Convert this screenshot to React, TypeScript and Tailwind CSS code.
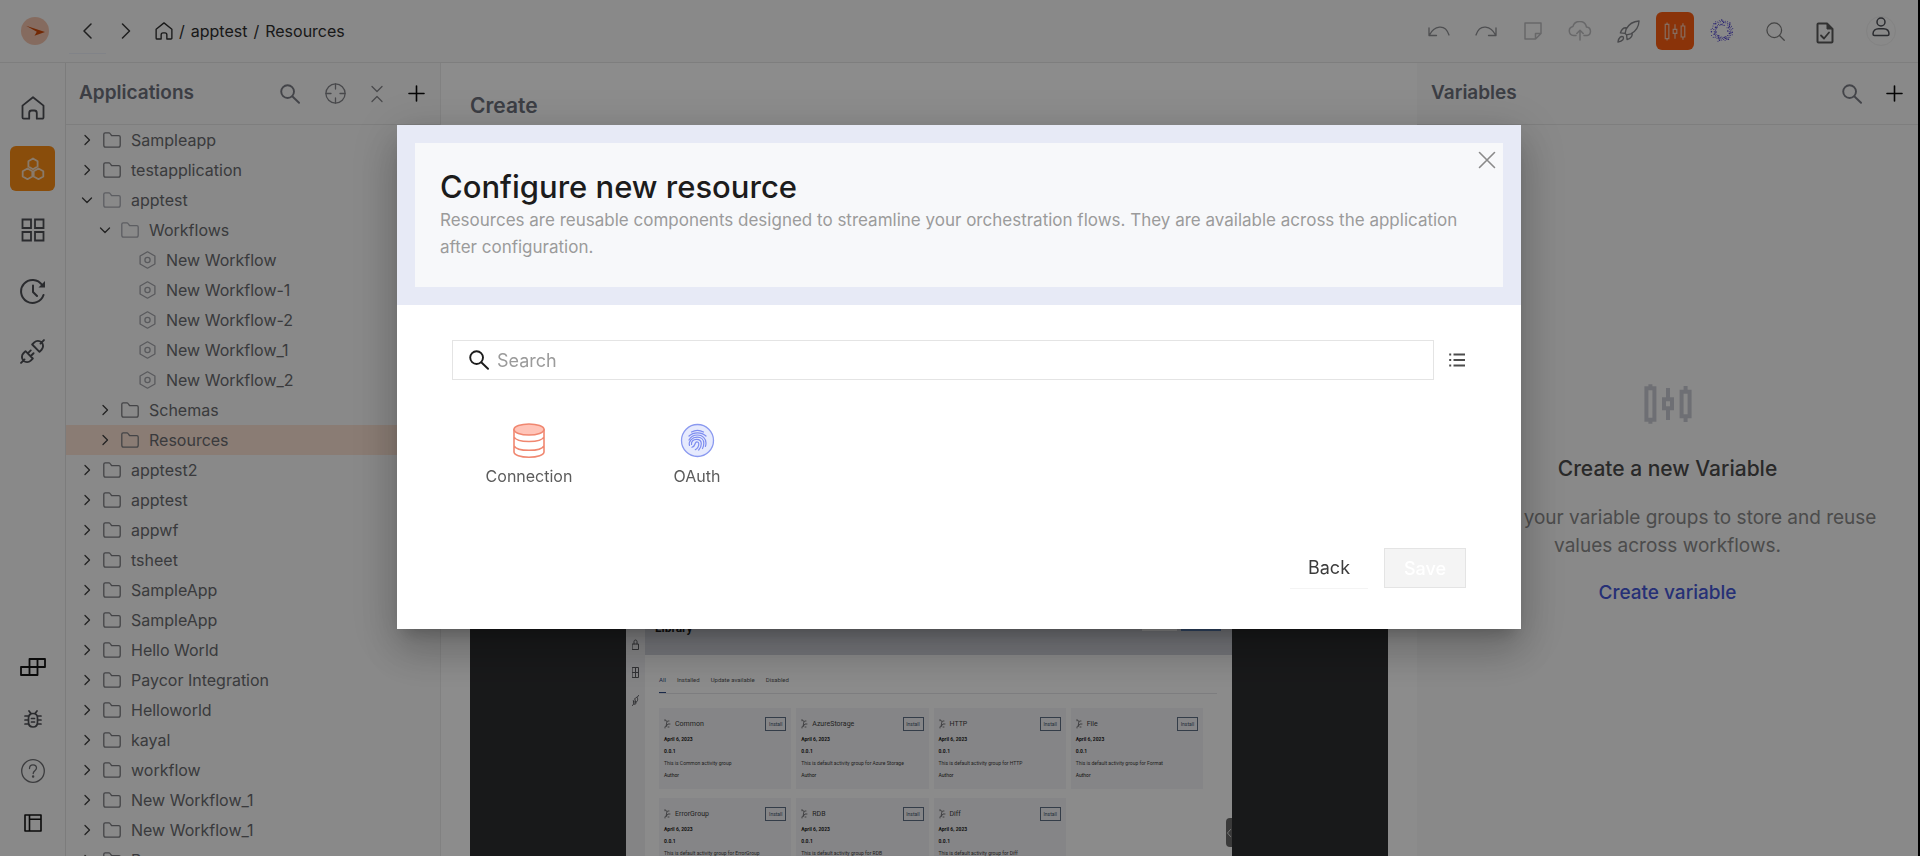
import React from "react";

type IconProps = { children: React.ReactNode; className?: string; vb?: string; sw?: number };

function Svg({ children, className = "", vb = "0 0 24 24", sw = 1.5 }: IconProps) {
  return (
    <svg
      viewBox={vb}
      className={"block shrink-0 " + className}
      fill="none"
      stroke="currentColor"
      strokeWidth={sw}
      strokeLinecap="round"
      strokeLinejoin="round"
      aria-hidden="true"
    >
      {children}
    </svg>
  );
}

function IconButton({ label, className = "", children }: { label: string; className?: string; children: React.ReactNode }) {
  return (
    <button type="button" aria-label={label} className={"flex shrink-0 items-center justify-center " + className}>
      {children}
    </button>
  );
}

const HomeIcon = ({ className }: { className: string }) => (
  <Svg className={className} sw={1.8}>
    <path d="M1.500 9.600 12 1.200l10.500 8.400V21.500a1.200 1.200 0 0 1-1.200 1.200H15.800V17a2.500 2.500 0 0 0-2.500-2.500h-2.600A2.500 2.500 0 0 0 8.200 17v5.700H2.700a1.200 1.200 0 0 1-1.200-1.200Z" />
  </Svg>
);

const SearchIcon = ({ className, sw = 1.9 }: { className: string; sw?: number }) => (
  <Svg className={className} sw={sw} vb="0 0 20 20">
    <circle cx="7.600" cy="7.600" r="6.400" />
    <path d="m12.500 12.500 6.500 6.300" />
  </Svg>
);

const ThinSearchIcon = ({ className }: { className: string }) => (
  <Svg className={className} sw={1.3} vb="0 0 20 20">
    <circle cx="8.700" cy="8.700" r="7.700" />
    <path d="m14.200 14.200 5 5" />
  </Svg>
);

const PlusIcon = ({ className }: { className: string }) => (
  <Svg className={className} vb="0 0 17 17" sw={1.6}>
    <path d="M8.500 1v15M1 8.500h15" />
  </Svg>
);

const SlidersIcon = ({ className, sw = 2 }: { className: string; sw?: number }) => (
  <Svg className={className} vb="0 0 24 21" sw={sw}>
    <path
      d="M1.200 2.600h4v15.800h-4ZM3.200.6v2M3.200 18.400v2M12 2.500v5.600M12 12.600v5.900M10 8.100h4v4.500h-4ZM18.800 4.400h4v12.200h-4ZM20.800 1.500v2.900M20.800 16.600v2.900"
      strokeLinecap="butt"
      strokeLinejoin="miter"
    />
  </Svg>
);

const FolderIcon = ({ className }: { className: string }) => (
  <Svg className={className} vb="0 0 18 16" sw={1.3}>
    <path d="M.8 13.300V2.200C.8 1.300 1.300.8 2.200.8h3.600c.6 0 1 .2 1.300.7l1 1.500c.3.4.6.6 1.100.6h6.600c.9 0 1.400.5 1.400 1.400v8.300c0 1.300-.6 1.900-1.900 1.900H2.700C1.400 15.200.8 14.600.8 13.300Z" />
  </Svg>
);

const HexIcon = () => (
  <Svg className="h-[18px] w-[17px] text-[#a3a4aa]" vb="0 0 17 18" sw={1.3}>
    <path d="M8.500.8 15.900 5v8l-7.400 4.200L1.100 13V5Z" />
    <circle cx="8.500" cy="9" r="2.600" />
  </Svg>
);

const PlugIcon = ({ className, sw = 1.8 }: { className: string; sw?: number }) => (
  <Svg className={className} sw={sw}>
    <path d="m1 23 3.300-3.300M19.700 4.300 23 1M11.700 5.300l7 7 2-2a4.900 4.900 0 0 0-7-7ZM12.300 18.700l-7-7-2 2a4.900 4.900 0 0 0 7 7ZM7.700 13.600l2.600-2.600M10.400 16.300l2.600-2.600" />
  </Svg>
);

const GridIcon = ({ className, sw = 1.8 }: { className: string; sw?: number }) => (
  <Svg className={className} sw={sw}>
    <path d="M1.500 1.500h8.500v8.500H1.500ZM14 1.500h8.500v8.500H14ZM1.500 14h8.500v8.500H1.500ZM14 14h8.500v8.500H14Z" strokeLinejoin="miter" />
  </Svg>
);

const ringDots = Array.from({ length: 84 }, (_, i) => {
  const angle = i * 2.399;
  const radius = 5.8 + ((i * 37) % 23) * 0.25;
  return { x: 12 + radius * Math.cos(angle), y: 12 + radius * Math.sin(angle), r: i % 3 === 0 ? 0.75 : 0.5 };
});

const DotRing = () => (
  <Svg className="size-6">
    {ringDots.map((dot, i) => (
      <circle key={i} cx={dot.x} cy={dot.y} r={dot.r} fill="currentColor" stroke="none" />
    ))}
  </Svg>
);

type Node = { name: string; level: 0 | 1 | 2; open?: boolean; active?: boolean };

const tree: Node[] = [
  { name: "Sampleapp", level: 0 },
  { name: "testapplication", level: 0 },
  { name: "apptest", level: 0, open: true },
  { name: "Workflows", level: 1, open: true },
  { name: "New Workflow", level: 2 },
  { name: "New Workflow-1", level: 2 },
  { name: "New Workflow-2", level: 2 },
  { name: "New Workflow_1", level: 2 },
  { name: "New Workflow_2", level: 2 },
  { name: "Schemas", level: 1 },
  { name: "Resources", level: 1, active: true },
  { name: "apptest2", level: 0 },
  { name: "apptest", level: 0 },
  { name: "appwf", level: 0 },
  { name: "tsheet", level: 0 },
  { name: "SampleApp", level: 0 },
  { name: "SampleApp", level: 0 },
  { name: "Hello World", level: 0 },
  { name: "Paycor Integration", level: 0 },
  { name: "Helloworld", level: 0 },
  { name: "kayal", level: 0 },
  { name: "workflow", level: 0 },
  { name: "New Workflow_1", level: 0 },
  { name: "New Workflow_1", level: 0 },
  { name: "Paycor", level: 0 },
];

const indents = ["pl-[15px]", "pl-[33px]", "pl-[73px]"];

function TreeRow({ node }: { node: Node }) {
  return (
    <li>
      <button
        type="button"
        className={
          "flex h-[30px] w-full items-center gap-[10px] text-left text-[16px] text-[#6a6b6f] " +
          indents[node.level] +
          (node.active ? " bg-[#fbe2d3]" : "")
        }
      >
        {node.level < 2 ? (
          <>
            <Svg className="size-3 text-[#3f3f3f]" vb="0 0 12 12" sw={1.3}>
              <path d={node.open ? "m1.500 4 4.500 4.500L10.500 4" : "M4 1.500 8.500 6 4 10.500"} />
            </Svg>
            <FolderIcon className={"h-4 w-[18px] " + (node.open ? "text-[#a9abb3]" : "text-[#7c7d81]")} />
          </>
        ) : (
          <HexIcon />
        )}
        <span>{node.name}</span>
      </button>
    </li>
  );
}

function TopBar() {
  return (
    <header className="flex h-[63px] shrink-0 items-center border-b border-[#e5e5e5] bg-[#f9f9f9] pr-[22px] pl-[21px]">
      <Svg className="size-7" vb="0 0 28 28">
        <circle cx="14" cy="14" r="14" fill="#f3c4ae" stroke="none" />
        <path d="M5 8.800 24 15 13.500 18.800l2.300-4Z" fill="#cf4a08" stroke="none" />
      </Svg>
      <div className="ml-5 flex items-center">
        <IconButton label="Back" className="h-[45px] w-[37px] border-b border-[#eceef8] text-[#3a3a3a]">
          <Svg className="size-4" vb="0 0 16 16">
            <path d="m11 1-7 7 7 7" />
          </Svg>
        </IconButton>
        <IconButton label="Forward" className="h-[45px] w-[39px] text-[#3a3a3a]">
          <Svg className="size-4" vb="0 0 16 16">
            <path d="m4.500 1 7 7-7 7" />
          </Svg>
        </IconButton>
      </div>
      <nav aria-label="Breadcrumb" className="ml-[10px] flex items-center gap-[6px] text-[16px] text-[#2f2f2f]">
        <a href="#home" aria-label="Home">
          <HomeIcon className="size-[18px]" />
        </a>
        <span>/</span>
        <a href="#apptest">apptest</a>
        <span>/</span>
        <a href="#resources">Resources</a>
      </nav>
      <div className="ml-auto flex items-center text-[#7c7c7c]">
        <IconButton label="Undo" className="w-[46px] text-[#8f9094]">
          <Svg className="h-3 w-[22px]" vb="0 0 22 12" sw={1.3}>
            <path d="M1 3v7.500h7.500M1.300 10.200C6 1 17-2 21 10" />
          </Svg>
        </IconButton>
        <IconButton label="Redo" className="w-[47px] text-[#8f9094]">
          <Svg className="h-3 w-[22px]" vb="0 0 22 12" sw={1.3}>
            <path d="M21 3v7.500h-7.500M20.700 10.200C16 1 5-2 1 10" />
          </Svg>
        </IconButton>
        <IconButton label="Note" className="w-12 text-[#bdbdc0]">
          <Svg className="size-[18px]" vb="0 0 18 18">
            <path d="M1 1h16v10.500L11.500 17H1ZM17 11.500h-5.500V17" />
          </Svg>
        </IconButton>
        <IconButton label="Publish" className="w-[46px] text-[#bdbdc0]">
          <Svg className="h-5 w-6" vb="0 0 24 20">
            <path d="M8 14.500H5.500a4.500 4.500 0 0 1-.6-8.900A7 7 0 0 1 18.500 6a4.300 4.300 0 0 1 .5 8.500h-3M12 19V9.500M8.800 12.500 12 9.300l3.200 3.200" />
          </Svg>
        </IconButton>
        <IconButton label="Deploy" className="mr-[3px] w-[50px] text-[#85868a]">
          <Svg className="size-[23px]" sw={1.4}>
            <path d="M23 1C17 1.300 12.500 4 9.500 9.500l-1 4.500 1.500 1.500 4.500-1C20 11.500 22.700 7 23 1ZM10.500 8.200c-3.500-.7-5.500.5-7 5.300l5 .5M15.800 13.500c.7 3.500-.5 5.500-5.300 7l-.5-5M6.500 17.500c-2-.8-4.500 0-5.500 5.500 5.500-1 6.300-3.500 5.500-5.500Z" />
          </Svg>
        </IconButton>
        <IconButton label="Variables" className="size-[38px] rounded-md bg-[#fb5e12] text-[#f4c7b0]">
          <SlidersIcon className="h-[19px] w-[22px]" sw={1.3} />
        </IconButton>
        <IconButton label="Assistant" className="ml-1 w-[47px] text-[#4438cc]">
          <DotRing />
        </IconButton>
        <IconButton label="Search" className="w-[60px]">
          <ThinSearchIcon className="size-[19px]" />
        </IconButton>
        <IconButton label="Validate" className="w-10 text-[#5a5a5a]">
          <Svg className="mt-1 h-[22px] w-[18px]" vb="0 0 18 22" sw={2}>
            <path d="M2.500 1.500h8.500l5.500 5.500v12.500a1 1 0 0 1-1 1h-13a1 1 0 0 1-1-1v-17a1 1 0 0 1 1-1Z" />
            <path d="M11 1.500v5.500h5.500Z" fill="currentColor" strokeWidth="1" />
            <path d="m5 13.500 3 3 5-6" strokeWidth="1.800" />
          </Svg>
        </IconButton>
        <IconButton label="Account" className="ml-[21px] size-[30px] rounded-full border border-[#eeeeee] text-[#4d4f57]">
          <Svg className="mb-2 h-5 w-[18px]" vb="0 0 18 20" sw={1.5}>
            <circle cx="9" cy="5" r="4" />
            <path d="M1 17c0-3.500 2.500-5.300 5.500-5.300h5c3 0 5.500 1.800 5.500 5.300 0 1-.5 1.500-1.500 1.500h-13C1.500 18.500 1 18 1 17Z" />
          </Svg>
        </IconButton>
      </div>
    </header>
  );
}

function SideRail() {
  return (
    <nav
      aria-label="Main"
      className="flex w-[66px] shrink-0 flex-col items-start justify-between border-r border-[#e2e2e2] bg-[#f9f9f9] pt-[22px] pb-[11px] pl-[10px] text-[#4d4f55]"
    >
      <div className="flex flex-col gap-4">
        <IconButton label="Home" className="size-[45px]">
          <HomeIcon className="size-6" />
        </IconButton>
        <IconButton label="Applications" className="size-[45px] rounded-md bg-[#f98c14] text-[#f9dfc2]">
          <Svg className="h-6 w-6" sw={1.8}>
            <path d="m12 1.500 4.600 2.700v5.300L12 12.200 7.400 9.500V4.200ZM6.500 11.500l4.800 2.700v5.300l-4.800 2.700-4.800-2.700v-5.300ZM17.500 11.500l4.800 2.700v5.300l-4.800 2.700-4.800-2.700v-5.300Z" />
          </Svg>
        </IconButton>
        <IconButton label="Library" className="size-[45px]">
          <GridIcon className="size-6" />
        </IconButton>
        <IconButton label="History" className="size-[45px]">
          <Svg className="size-[26px]" vb="0 0 26 26" sw={2}>
            <path d="M23.500 17A11.500 11.500 0 1 1 22 6.800M13 7.500V14l4 4" />
            <path d="M25 3v6.500h-6.500Z" fill="currentColor" stroke="none" />
          </Svg>
        </IconButton>
        <IconButton label="Connectors" className="size-[45px]">
          <PlugIcon className="size-[25px]" />
        </IconButton>
      </div>
      <div className="flex flex-col gap-[7px]">
        <IconButton label="Modules" className="size-[45px] text-[#141414]">
          <Svg className="h-[18px] w-[26px]" vb="0 0 26 18" sw={1.8}>
            <path d="M1 9h8.500v8H1ZM9.500 9h8v8h-8ZM9.500 1h8v8h-8ZM17.500 1H25v8h-7.500Z" />
          </Svg>
        </IconButton>
        <IconButton label="Debug" className="size-[45px] text-[#4d4f55]">
          <Svg className="h-[18px] w-[18px]" vb="0 0 18 18" sw={1.7}>
            <path d="M9 3.500c2.800 0 4.500 2 4.500 4.500v4c0 3-1.800 5-4.500 5s-4.500-2-4.500-5V8c0-2.500 1.700-4.500 4.500-4.500ZM5 1l2 2.500M13 1l-2 2.500M1 6h3.500M1 10h3.500M1 14h3.500M13.500 6H17M13.500 10H17M13.500 14H17M7.500 8.500h3M7.500 12h3" />
          </Svg>
        </IconButton>
        <IconButton label="Help" className="size-[45px] text-[#6d6e72]">
          <Svg className="size-6" sw={1.3}>
            <circle cx="12" cy="12" r="11.300" />
            <path d="M8.500 9.500c0-2.200 1.500-3.700 3.500-3.700s3.500 1.300 3.500 3.300c0 2.600-3.300 2.800-3.300 5.400" />
            <circle cx="12.100" cy="17.600" r=".6" fill="currentColor" />
          </Svg>
        </IconButton>
        <IconButton label="Panels" className="size-[45px] text-[#141414]">
          <Svg className="size-[18px]" vb="0 0 18 18" sw={1.6}>
            <path d="M1 1h16v16H1ZM5.500 1v16M5.500 5.200H17" />
          </Svg>
        </IconButton>
      </div>
    </nav>
  );
}

type Pack = { name: string; text: string };

const packs: Pack[] = [
  { name: "Common", text: "This is Common activity group" },
  { name: "AzureStorage", text: "This is default activity group for Azure Storage" },
  { name: "HTTP", text: "This is default activity group for HTTP" },
  { name: "File", text: "This is default activity group for Format" },
  { name: "ErrorGroup", text: "This is default activity group for ErrorGroup" },
  { name: "RDB", text: "This is default activity group for RDB" },
  { name: "Diff", text: "This is default activity group for Diff" },
];

function PackCard({ pack }: { pack: Pack }) {
  return (
    <article className="flex h-[81px] flex-col bg-[#f3f3f6] px-[5px] pt-[9px] text-[5px] leading-[12px] text-[#3c3c3c]">
      <div className="mb-[2px] flex h-[14px] items-center gap-1">
        <Svg className="h-[10px] w-[7px] text-[#55565a]" vb="0 0 7 10" sw={0.8}>
          <path d="M1 .8v1M1 8v1M3 2.500l-1 5M3 2.500 1.500 1M2 7.500 4 5h2M4 2h1M4 8h1" />
        </Svg>
        <h4 className="text-[7px]">{pack.name}</h4>
        <button type="button" className="ml-auto flex h-[14px] w-[21px] items-center justify-center border border-[#5f6f85] text-[5px] text-[#44566e]">
          Install
        </button>
      </div>
      <p className="font-bold text-[#1c1c1c]">April 6, 2023</p>
      <p className="font-bold text-[#1c1c1c]">0.0.1</p>
      <p className="whitespace-nowrap">{pack.text}</p>
      <p className="text-[#1c1c1c]">Author</p>
    </article>
  );
}

function Preview() {
  return (
    <div className="flex min-h-0 flex-1 justify-center overflow-hidden bg-[#2d2e30] font-[Roboto,sans-serif]">
      <div className="relative flex w-[66%] bg-[#fdfdfd]">
        <div className="flex w-[19px] shrink-0 flex-col items-center gap-[17px] bg-[#f0f0f3] pt-[486px] text-[#5a5b60]">
          <Svg className="h-[11px] w-[7px]" vb="0 0 7 11" sw={1}>
            <path d="M.5 5h6v5.500h-6ZM2 5V2.500C2 .5 5 .5 5 2.500V5" />
          </Svg>
          <Svg className="h-[11px] w-[7px]" vb="0 0 7 11" sw={1}>
            <path d="M.5.5h6v10h-6ZM3.500.5v10M.5 5.500h6" />
          </Svg>
          <Svg className="h-[11px] w-[7px]" vb="0 0 7 11" sw={1}>
            <path d="M.5 10.500 2 8.500M5 2.500 6.500.5M3 3.500C5 1 6 3 5.500 5.500L4 7.500ZM1.500 6 4 8.500C2.500 10 1 9.500 1.500 6Z" />
          </Svg>
        </div>
        <div className="flex min-w-0 flex-1 flex-col">
          <div className="flex h-[502px] shrink-0 items-end justify-between bg-[#d4d6de] pr-[11px] pb-4 pl-[10px] text-[#1c1c1c]">
            <h3 className="text-[12px] leading-[22px] font-bold">Library</h3>
            <div className="mb-2 flex gap-1">
              <span className="h-4 w-[35px] bg-white" />
              <span className="h-4 w-10 bg-[#5b82ba]" />
            </div>
          </div>
          <div className="mr-[15px] ml-[14px] flex h-[39px] shrink-0 items-end gap-[11px] border-b border-[#e4e4e8] text-[6px] text-[#55565a]">
            <span className="h-[18px] border-b border-[#2e4b86] text-[#2e4b86]">All</span>
            <span className="h-[18px]">Installed</span>
            <span className="h-[18px]">Update available</span>
            <span className="h-[18px]">Disabled</span>
          </div>
          <div className="mt-[14px] mr-[29px] ml-[14px] grid grid-cols-4 gap-x-[5px] gap-y-[9px]">
            {packs.map((pack) => (
              <PackCard key={pack.name} pack={pack} />
            ))}
          </div>
        </div>
        <div className="absolute right-0 bottom-[9px] flex h-[29px] w-[6px] items-center justify-center rounded-l-sm bg-[#6a6a6a] text-[#d8d8d8]">
          <Svg className="h-2 w-1" vb="0 0 4 8" sw={1}>
            <path d="M3.500.500.500 4l3 3.500" />
          </Svg>
        </div>
      </div>
    </div>
  );
}

function ResourceTile({ label, children }: { label: string; children: React.ReactNode }) {
  return (
    <button type="button" className="flex w-[168px] flex-col items-center gap-[6px] text-[16px] leading-6 text-[#5c5c5c]">
      {children}
      {label}
    </button>
  );
}

function ResourceDialog() {
  return (
    <div className="fixed inset-y-0 right-0.5 left-0 flex items-start justify-center bg-black/45 px-8 pt-[125px]">
      <section
        role="dialog"
        aria-modal="true"
        aria-labelledby="dialog-title"
        className="w-full max-w-[1124px] bg-white shadow-[0_11px_15px_-7px_rgba(0,0,0,0.2),0_24px_38px_3px_rgba(0,0,0,0.14),0_9px_46px_8px_rgba(0,0,0,0.12)]"
      >
        <div className="relative border-[18px] border-[#e7eaf6] bg-[#f7f8fa] pt-6 pr-10 pb-[26px] pl-[25px]">
          <h2 id="dialog-title" className="text-[31px] leading-[40px] font-medium text-[#1c1c1c]">
            Configure new resource
          </h2>
          <p className="text-[17px] leading-[27px] text-[#9b9b9b]">
            Resources are reusable components designed to streamline your orchestration flows. They are available across the
            application after configuration.
          </p>
          <IconButton label="Close" className="absolute top-[7px] right-[6px] size-5 text-[#8a8a8a]">
            <Svg className="size-[18px]" vb="0 0 18 18" sw={1.6}>
              <path d="m1.500 1.500 15 15M16.500 1.500l-15 15" />
            </Svg>
          </IconButton>
        </div>
        <div className="px-[55px] pt-[35px] pb-10">
          <div className="flex items-center">
            <label className="flex h-10 flex-1 items-center gap-2 border border-[#e4e4e4] pl-4">
              <SearchIcon className="size-5 text-[#1c1c1c]" />
              <input
                type="text"
                aria-label="Search resources"
                placeholder="Search"
                className="h-full min-w-0 flex-1 bg-transparent text-[18px] outline-none placeholder:text-[#9b9b9b]"
              />
            </label>
            <IconButton label="List view" className="ml-[14px] h-5 w-[18px] text-[#4c4c4c]">
              <Svg className="h-4 w-[18px]" vb="0 0 18 16" sw={2}>
                <path d="M5.500 2.500h11.500M5.500 8h11.500M5.500 13.500h11.500M1.200 2.500h2M1.200 8h2M1.200 13.500h2" strokeLinecap="butt" />
              </Svg>
            </IconButton>
          </div>
          <div className="mt-[43px] -ml-[7px] flex">
            <ResourceTile label="Connection">
              <Svg className="h-[35px] w-8" vb="0 0 32 35" sw={1.6}>
                <path
                  d="M1 6.500v22.500c0 3 6.500 5.200 15 5.200s15-2.200 15-5.200V6.500M1 14c1.500 3 7.500 4.500 15 4.500S29.500 17 31 14M1 22.800c1.500 3 7.500 4.500 15 4.500s13.500-1.500 15-4.500"
                  stroke="#f08770"
                />
                <ellipse cx="16" cy="6.500" rx="15" ry="5.500" fill="#ffc4b8" stroke="#f08770" />
              </Svg>
            </ResourceTile>
            <ResourceTile label="OAuth">
              <Svg className="size-[35px]" vb="0 0 35 35" sw={1.3}>
                <circle cx="17.500" cy="17.500" r="16" fill="#e6eafd" stroke="#8b9af0" />
                <g stroke="#7d8cf0" strokeWidth="1.200">
                  <path d="M11.500 9c3.500-1.900 8.500-1.900 12 0M9 13c4.500-4.300 12.500-4.300 17 0M9 17c1.500-3 4.700-5 8.500-5 5 0 8.500 3.500 8.500 8 0 1.300-.2 2.500-.6 3.500" />
                  <path d="M9.500 22.500c-1.300-4 2.500-8.300 7.700-8.300 4 0 6.600 2.600 6.600 6 0 2-.5 3.800-1.300 5.300M12 24.300c3.200-1 2.700-3.300 3.500-4.500 1-1.500 3.300-1 3.300.9 0 2.500-1.500 4.800-3.500 6" />
                  <path d="M11.500 21.500c-.5-3 2-5.200 5-5.200 3 0 4.800 1.900 4.800 4.500 0 2.400-1 4.600-2.600 6.200" />
                </g>
              </Svg>
            </ResourceTile>
          </div>
          <div className="mt-[59px] flex items-center justify-end gap-4">
            <button type="button" className="h-[42px] w-[78px] border-b border-[#f4f4f4] text-[18px] text-[#3c3c3c]">
              Back
            </button>
            <button type="button" disabled className="h-10 w-[82px] border border-[#e4e4e4] bg-[#f4f4f4] text-[18px] font-medium text-white">
              Save
            </button>
          </div>
        </div>
      </section>
    </div>
  );
}

export default function App() {
  return (
    <div className="flex h-screen flex-col overflow-hidden border-r-2 border-black bg-white font-[Inter,sans-serif]">
      <TopBar />
      <div className="flex min-h-0 flex-1">
        <SideRail />
        <aside className="flex w-[375px] shrink-0 flex-col border-r border-[#ececec] bg-[#f9f9f9]">
          <div className="flex h-[62px] shrink-0 items-center border-b border-[#e5e5e5] pr-[15px] pl-[13px] text-[#85868b]">
            <h2 className="flex-1 text-[19px] font-semibold text-[#6d717c]">Applications</h2>
            <IconButton label="Search applications" className="text-[#7b7d85]">
              <SearchIcon className="size-5" />
            </IconButton>
            <IconButton label="Locate" className="ml-[25px]">
              <Svg className="size-[21px]" vb="0 0 21 21" sw={1.3}>
                <circle cx="10.500" cy="10.500" r="9.600" />
                <path d="M10.500 1v5M10.500 15v5M1 10.500h5M15 10.500h5" />
              </Svg>
            </IconButton>
            <IconButton label="Collapse all" className="ml-[25px]">
              <Svg className="h-[18px] w-3" vb="0 0 12 18" sw={1.3}>
                <path d="m1 1.500 5 5 5-5M1 16.500l5-5 5 5" />
              </Svg>
            </IconButton>
            <IconButton label="Add application" className="ml-[25px] text-[#0a0a0a]">
              <PlusIcon className="size-[17px]" />
            </IconButton>
          </div>
          <ul className="min-h-0 flex-1 overflow-hidden">
            {tree.map((node, i) => (
              <TreeRow key={i} node={node} />
            ))}
          </ul>
        </aside>
        <main className="flex min-w-0 flex-1 flex-col px-[29px] pt-[28px]">
          <h1 className="mb-[32px] text-[21px] leading-[30px] font-semibold text-[#6d717c]">Create</h1>
          <Preview />
        </main>
        <aside className="flex w-[501px] shrink-0 flex-col bg-[#f9f9f9]">
          <div className="flex h-[62px] shrink-0 items-center border-b border-[#e5e5e5] pr-[15px] pl-[14px]">
            <h2 className="flex-1 text-[19px] font-semibold text-[#6d717c]">Variables</h2>
            <IconButton label="Search variables" className="text-[#7b7d85]">
              <SearchIcon className="size-5" />
            </IconButton>
            <IconButton label="Add variable" className="ml-6 text-[#0a0a0a]">
              <PlusIcon className="size-[17px]" />
            </IconButton>
          </div>
          <div className="flex flex-1 flex-col items-center px-10 pt-[258px] text-center">
            <SlidersIcon className="h-[42px] w-12 text-[#c9cbd3]" />
            <h3 className="mt-[29px] text-[21px] leading-[30px] font-medium text-[#4c4c4c]">Create a new Variable</h3>
            <p className="mt-5 text-[19px] leading-7 text-[#8a8a8a]">
              Create your variable groups to store and reuse values across workflows.
            </p>
            <button type="button" className="mt-[18px] text-[19px] leading-[30px] font-medium text-[#4658d8]">
              Create variable
            </button>
          </div>
        </aside>
      </div>
      <ResourceDialog />
    </div>
  );
}
